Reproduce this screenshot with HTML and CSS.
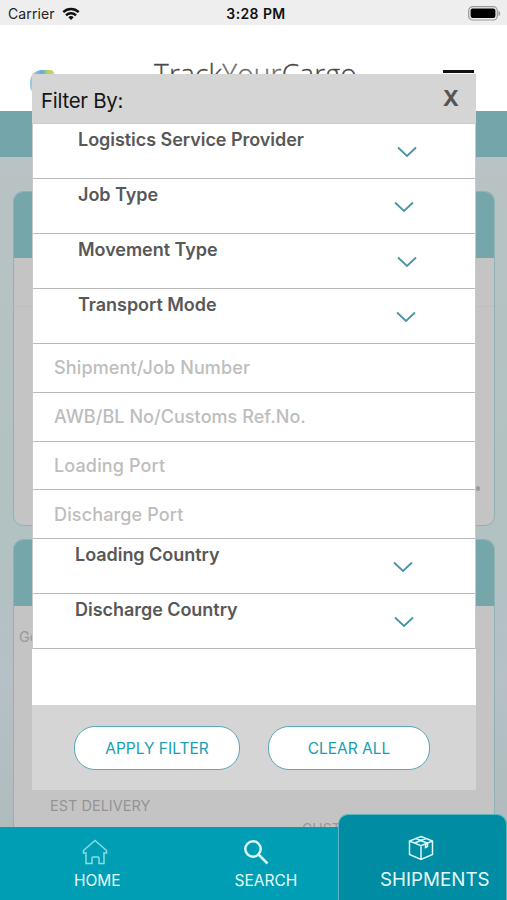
FILE: index.html
```html
<!DOCTYPE html>
<html lang="en">
<head>
<meta charset="utf-8">
<title>TrackYourCargo</title>
<link rel="stylesheet" href="styles.css">
</head>
<body>
<div class="screen">
  <header class="status">
    <div class="carrier"><span>Carrier</span>
      <svg width="18" height="14" viewBox="0 0 18 14" fill="none" stroke="#111" stroke-width="2.4"><path d="M1.3 5.2A11 11 0 0 1 16.700 5.200"/><path d="M4 8.300A7 7 0 0 1 14 8.300"/><path d="M9 13 6.300 10.200A4 4 0 0 1 11.700 10.200Z" fill="#111" stroke="none"/></svg>
    </div>
    <b class="clock">3:28 PM</b>
    <svg class="battery" width="33" height="15" viewBox="0 0 33 15"><rect x=".7" y=".7" width="28.600" height="13.300" rx="4" fill="#eee" stroke="#999" stroke-width="1.200"/><rect x="2.600" y="2.600" width="24.800" height="9.500" rx="2" fill="#000"/><path d="M31 5.500q1.500 2 0 4z" fill="#888" stroke="#999"/></svg>
  </header>
  <div class="brandbar">
    <span class="logo"></span>
    <span class="brand">Track<i>Your</i>Cargo</span>
    <span class="burger"></span>
  </div>
  <div class="band"></div>
  <main class="list">
    <article class="card"><div class="cardhead"></div><div class="cardline"></div><span class="speck"></span></article>
    <article class="card second"><div class="cardhead"></div><p class="goods">Goods</p><p class="est">EST DELIVERY</p><p class="customs">CUSTOMS</p></article>
  </main>

  <section class="dialog">
    <div class="dialoghead"><h1>Filter By:</h1><button class="close">X</button></div>
    <div class="fields">
      <div class="pick"><span>Logistics Service Provider</span><svg class="chev" viewBox="0 0 20 12"><path d="M1 1.500 10 10 19 1.500"/></svg></div>
      <div class="pick p2"><span>Job Type</span><svg class="chev" viewBox="0 0 20 12"><path d="M1 1.500 10 10 19 1.500"/></svg></div>
      <div class="pick"><span>Movement Type</span><svg class="chev" viewBox="0 0 20 12"><path d="M1 1.500 10 10 19 1.500"/></svg></div>
      <div class="pick p4"><span>Transport Mode</span><svg class="chev" viewBox="0 0 20 12"><path d="M1 1.500 10 10 19 1.500"/></svg></div>
      <div class="entry">Shipment/Job Number</div>
      <div class="entry customsref">AWB/BL No/Customs Ref.No.</div>
      <div class="entry">Loading Port</div>
      <div class="entry">Discharge Port</div>
      <div class="pick p5"><span>Loading Country</span><svg class="chev" viewBox="0 0 20 12"><path d="M1 1.500 10 10 19 1.500"/></svg></div>
      <div class="pick p6"><span>Discharge Country</span><svg class="chev" viewBox="0 0 20 12"><path d="M1 1.500 10 10 19 1.500"/></svg></div>
    </div>
    <div class="actions"><button class="apply">APPLY FILTER</button><button class="clear">CLEAR ALL</button></div>
  </section>

  <nav class="tabs">
    <a class="tab home"><svg width="26" height="26" viewBox="0 0 26 26"><path d="M1.500 11.500 13 1.500 24.500 11.500V14H22V24.500H17V19Q17 18 16 18H11Q10 18 10 19V24.500H4V14H1.500Z"/></svg><span>HOME</span></a>
    <a class="tab search"><svg width="26" height="26" viewBox="0 0 26 26"><circle cx="10" cy="10" r="7.700"/><path d="M15.500 15.500 24.500 24.500"/></svg><span>SEARCH</span></a>
    <a class="tab ship"><svg width="26" height="26" viewBox="0 0 26 26"><path d="M13 1.500 24.500 6V19.500L13 24.500 1.500 19.500V6ZM1.500 6 13 10.800 24.500 6M13 10.800V24.500M6.500 8 18 3.500M17.500 9V12.500L19.500 11.500V8.200L8 3.500"/></svg><span>SHIPMENTS</span></a>
  </nav>
</div>
</body>
</html>
```
FILE: styles.css
```css
*{box-sizing:border-box}
body{margin:0;font-family:Inter,"Liberation Sans",sans-serif}
h1,p{margin:0}
button{font-family:inherit;padding:0;border:0;background:none}
.screen{position:relative;width:507px;height:900px;overflow:hidden;background:#b4c0c2;display:flex;flex-direction:column}
.status{height:25px;flex:none;background:#eee;display:grid;grid-template-columns:1fr auto 1fr;align-items:center;padding:2px 6px 0 11px;color:#222}
.carrier{display:flex;align-items:center;gap:7px;font-size:14px;letter-spacing:.1px;margin-left:-3px}
.clock{font-size:14px;font-weight:600;color:#111;letter-spacing:.4px}
.battery{justify-self:end}
.brandbar{height:86px;flex:none;background:#fff;display:flex;align-items:flex-start;padding-left:30px}
.logo{width:24px;height:24px;margin-top:45px;border-radius:12px 4px 4px 8px;background:linear-gradient(90deg,#9dcdea 0,#65a9d5 50%,#b8d45c 75%,#bcd66a)}
.brand{font-family:"Open Sans",sans-serif;font-weight:300;font-size:28px;letter-spacing:.2px;line-height:34px;margin:30.500px 0 0 100px;width:202px;color:#444;-webkit-text-stroke:.3px #555;white-space:nowrap}
.brand i{font-style:normal;color:#777}
.burger{width:31px;height:3px;background:#111;margin:45px 0 0 87px}
.band{height:46px;flex:none;background:#74a5aa}
.list{padding:34px 12px 0 13px;display:flex;flex-direction:column;gap:13px;background:linear-gradient(#b9c2c4,#b1c2c1 45%,#b6c0c6 70%,#acbab8);flex:1}
.card{height:335px;flex:none;background:#c4c4c4;border:1.500px solid #8fb2b3;border-radius:10px;overflow:hidden;display:flex;flex-direction:column}
.cardhead{height:66px;flex:none;background:#75a6aa}
.cardline{height:49px;border-bottom:1px solid #bdbdbd}
.speck{width:4px;height:5px;border-radius:2px;background:#9b9b9b;margin:179px 14px 0 auto}
.goods{font-size:14.500px;color:#999;margin:22px 0 0 5px;line-height:18px}
.est{font-size:14.500px;line-height:18px;color:#949494;margin:151px 0 0 36px}
.customs{font-size:14px;line-height:18px;color:#999;margin:5px 0 0 288px}
.dialog{position:absolute;left:32px;top:74px;width:444px;height:716px;background:#fff;display:flex;flex-direction:column}
.dialoghead{height:49px;flex:none;background:#d5d5d5;display:flex;justify-content:space-between;align-items:center;padding:4px 17px 0 9px}
h1{font-weight:400;font-size:20.500px;letter-spacing:-.3px;color:#161616}
.close{font-size:22px;font-weight:700;color:#555;margin-top:-5px}
.fields{border:1px solid #c9c9c9;border-bottom:0;border-top-color:#ccc;flex:none}
.pick{height:55px;border-bottom:1.500px solid #b9b9b9;padding:5px 59px 0 45px;display:flex;justify-content:space-between;color:#585858;font-size:18px;letter-spacing:-.04px;line-height:22px;font-weight:600;white-space:nowrap}
.chev{width:20px;height:12px;margin-top:17px;fill:none;stroke:#4994a6;stroke-width:1.800}
.pick:first-child .chev,.pick:nth-child(3) .chev{margin-right:-1px}
.p2{padding-right:61px}.p4{padding-right:59px}.p5{padding-left:42px;padding-right:62px}.p6{padding-left:42px;padding-right:61px}
.entry{height:48.750px;border-bottom:1.500px solid #b9b9b9;padding-left:21px;display:flex;align-items:center;color:#bdbdbd;font-size:18px;letter-spacing:.14px;font-weight:500;white-space:nowrap}
.customsref{letter-spacing:.06px}
.actions{height:85px;margin-top:auto;background:#d5d5d5;display:flex;gap:28px;padding:21px 0 0 42px}
.actions button{height:44px;border:1.500px solid #58aab6;border-radius:21px;background:#fff;color:#18a0b3;font-size:15.500px}
.apply{width:166px}.clear{width:162px}
.tabs{position:absolute;left:0;right:0;bottom:0;height:86px;display:flex;align-items:flex-end}
.tab{height:73px;background:#009eb4;color:#e4fbfc;display:flex;flex-direction:column;font-size:15.500px;line-height:20px}
.tab svg{fill:none;stroke:#d9f8fa;stroke-width:1.500;flex:none}
.home{width:170px;padding:12px 0 0 74px}.home svg{margin-left:8px;stroke:#8adbe5;margin-bottom:6px}
.search{width:168px;padding:12px 0 0 64.500px}.search svg{margin-left:8px;stroke-width:2.500;margin-bottom:6px}
.ship{width:169px;height:86px;background:#008ca2;border:1px solid #5ab8c5;border-bottom:0;border-radius:10px 10px 0 0;padding:20px 0 0 41px;font-size:18.800px;line-height:24px}.ship svg{margin-left:28px;margin-bottom:7px}
```
